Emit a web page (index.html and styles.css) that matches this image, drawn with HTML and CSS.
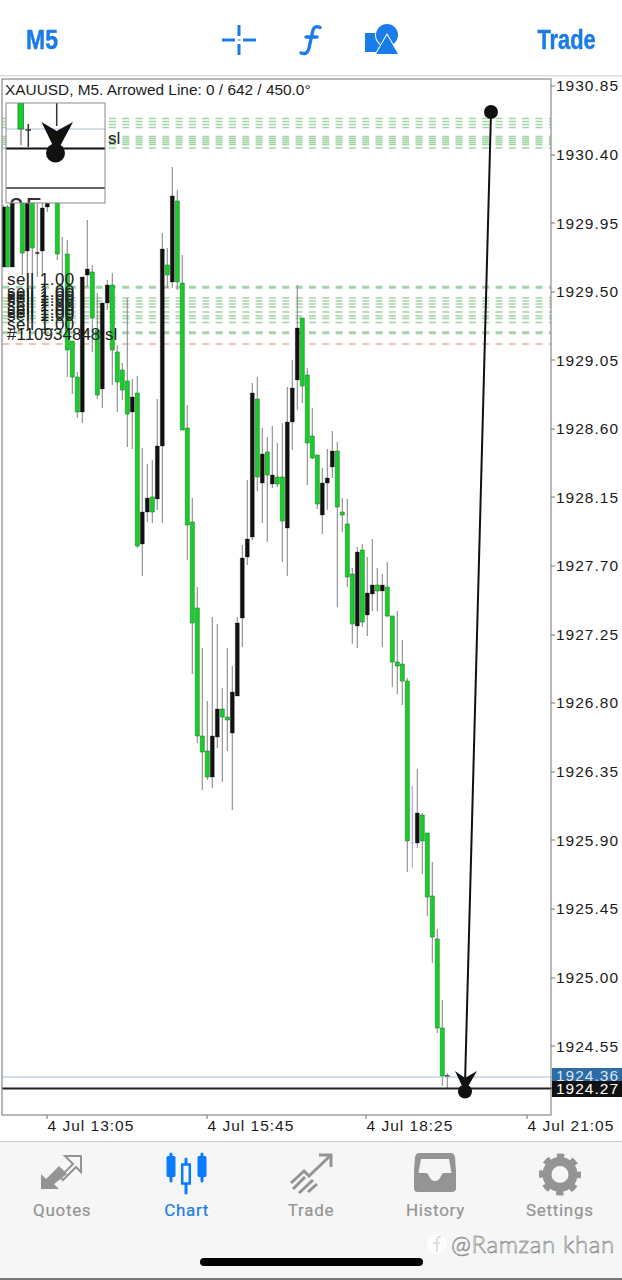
FILE: index.html
```html
<!DOCTYPE html>
<html lang="en">
<head>
<meta charset="utf-8">
<title>XAUUSD M5 Chart</title>
<link rel="stylesheet" href="styles.css">
</head>
<body>
<div class="screen">
  <header class="topbar">
    <span class="top-text top-left">M5</span>
    <div class="tools">
      <svg class="tool" width="34" height="30" viewBox="0 0 34 30"><path class="cross" d="M0 15H13M21 15H34M17 0V11M17 19V30M17 14.500V15.500"/></svg>
      <svg class="tool tool-f" width="24" height="30" viewBox="0 0 24 30"><path class="fn" d="M22 2.500C18 0.500 15.500 2 14.500 7L11 23C10 28 7 29.500 3 28M8 12H19"/></svg>
      <svg class="tool tool-s" width="34" height="32" viewBox="0 0 34 32"><rect class="shape" x="0" y="9" width="19" height="19"/><circle class="shape shape-cut" cx="22" cy="11" r="11"/><path class="shape shape-cut" d="M22 11L33 30H11Z"/></svg>
    </div>
    <span class="top-text top-right">Trade</span>
  </header>

  <svg class="chart" width="622" height="1066" viewBox="0 75 622 1066">
    <defs><clipPath id="plot"><rect x="2" y="79" width="549" height="1036"/></clipPath>
    <clipPath id="mini"><rect x="6" y="103" width="99" height="100"/></clipPath></defs>
    <rect class="top-rule" x="0" y="75" width="622" height="1.500"/>
    <g class="soft" clip-path="url(#plot)">
      <path class="lvl" d="M2.300 118.500H551M2.300 121.500H551M2.300 124.500H551M2.300 127.500H551M2.300 136.500H551M2.300 138.500H551M2.300 140.500H551M2.300 142.500H551M2.300 144.500H551M2.300 148H551"/>
      <path class="lvl" d="M2.300 286.500H551M2.300 288H551M2.300 298H551M2.300 301H551M2.300 304H551M2.300 307H551M2.300 312H551M2.300 316H551M2.300 318.500H551M2.300 322.500H551M2.300 332H551M2.300 333.500H551"/>
      <path class="lvl lvl-red" d="M2.300 344H551"/>
      <path class="wick" d="M3.300 205V267M7.300 205V267M12.300 203V267M22.300 203V275M27.300 203V293M32.300 203V295M37.300 203V277M42.300 203V277M47.300 203V212M57.300 203V260M62.300 237V295M67.300 240V377M72.300 341V394M77.300 372V418M82.300 277V423M87.300 220V287M92.300 265V352M97.300 293V399M102.300 303V408M107.300 280V310M112.300 273V385M117.300 345V412M122.300 363V400M127.300 298V447M132.300 379V449M137.300 376V548M142.300 448V576M147.300 464V522M152.300 460V523M157.300 399V510M162.300 233V523M167.300 248V288M172.300 167V288M177.300 190V290M182.300 255V430M187.300 405V560M192.300 498V674M197.300 587V743M202.300 648V790M207.300 701V780M212.300 617V788M217.300 624V748M222.300 688V782M227.300 648V751M232.300 666V810M237.300 617V696M242.300 545V647M247.300 480V565M252.300 383V540M257.300 377V491M262.300 428V523M267.300 437V542M272.300 426V488M277.300 443V487M282.300 423V562M287.300 387V576M292.300 360V450M297.300 285V410M302.300 318V403M307.300 368V485M312.300 408V459M317.300 455V509M322.300 468V534M327.300 449V510M332.300 431V478M337.300 442V607M342.300 498V532M347.300 499V587M352.300 568V644M357.300 547V648M362.300 544V627M367.300 557V636M372.300 539V611M377.300 568V611M382.300 574V647M387.300 562V617M392.300 616V687M397.300 611V694M402.300 640V705M407.300 678V872M417.300 769V848M422.300 813V874M427.300 833V916M432.300 862V963M437.300 929V1033M442.300 1000V1086M447.300 1073V1088"/>
      <path class="wick-blue" d="M412.300 786V868M410.800 843H413.800"/>
      <path class="doji" d="M35.300 253H39.300M445 1076H449.500"/>
      <path class="body-g" d="M5.300 207h4V267h-4zM20.300 203h4V253h-4zM30.300 203h4V248h-4zM55.300 203h4V254h-4zM65.300 254h4V350h-4zM70.300 341h4V377h-4zM75.300 377h4V412h-4zM90.300 272h4V318h-4zM95.300 330h4V395h-4zM110.300 285h4V350h-4zM115.300 352h4V382h-4zM120.300 370h4V390h-4zM125.300 381h4V414h-4zM135.300 393h4V546h-4zM150.300 497h4V512h-4zM165.300 265h4V275h-4zM175.300 201h4V282h-4zM180.300 283h4V430h-4zM185.300 428h4V525h-4zM190.300 522h4V623h-4zM195.300 608h4V736h-4zM200.300 736h4V752h-4zM205.300 751h4V777h-4zM220.300 709h4V717h-4zM225.300 717h4V720h-4zM255.300 399h4V477h-4zM265.300 452h4V475h-4zM275.300 477h4V484h-4zM280.300 477h4V521h-4zM300.300 318h4V386h-4zM305.300 375h4V443h-4zM310.300 436h4V458h-4zM315.300 455h4V504h-4zM335.300 451h4V507h-4zM340.300 512h4V515h-4zM345.300 524h4V577h-4zM350.300 574h4V624h-4zM360.300 550h4V622h-4zM375.300 585h4V591h-4zM385.300 587h4V616h-4zM390.300 616h4V662h-4zM395.300 662h4V666h-4zM400.300 664h4V681h-4zM405.300 681h4V841h-4zM420.300 815h4V841h-4zM425.300 833h4V897h-4zM430.300 896h4V937h-4zM435.300 939h4V1028h-4zM440.300 1028h4V1076h-4z"/>
      <path class="body-k" d="M1.300 207h4V267h-4zM10.300 203h4V267h-4zM25.300 203h4V251h-4zM40.300 208h4V251h-4zM45.300 203h4V207h-4zM80.300 277h4V412h-4zM85.300 269h4V275h-4zM100.300 303h4V389h-4zM105.300 285h4V303h-4zM130.300 397h4V412h-4zM140.300 512h4V544h-4zM145.300 498h4V512h-4zM155.300 446h4V499h-4zM160.300 249h4V446h-4zM170.300 196h4V282h-4zM210.300 736h4V777h-4zM215.300 709h4V737h-4zM230.300 692h4V733h-4zM235.300 623h4V696h-4zM240.300 558h4V618h-4zM245.300 539h4V557h-4zM250.300 393h4V537h-4zM260.300 454h4V483h-4zM270.300 475h4V484h-4zM285.300 422h4V528h-4zM290.300 388h4V422h-4zM295.300 328h4V380h-4zM320.300 483h4V515h-4zM325.300 478h4V483h-4zM330.300 451h4V467h-4zM355.300 552h4V626h-4zM365.300 593h4V615h-4zM370.300 585h4V594h-4zM380.300 585h4V591h-4zM415.300 813h4V843h-4z"/>
    </g>

    <path class="price-blue" d="M2 1077H552"/>
    <path class="price-black" d="M2 1088.500H552"/>

    <g class="trendline">
      <path class="tline" d="M491 112L465 1084"/>
      <circle cx="491" cy="112" r="7"/>
      <path d="M455 1071L465 1078L477 1071L466 1090H464Z"/>
      <circle cx="465" cy="1091.500" r="7"/>
    </g>

    <rect class="frame" x="2" y="79" width="549" height="1036"/>
    <path class="ticks" d="M551 86H555M551 155H555M551 223H555M551 292H555M551 360H555M551 429H555M551 497H555M551 566H555M551 635H555M551 703H555M551 772H555M551 840H555M551 909H555M551 978H555M551 1046H555M47 1115V1119M207 1115V1119M366 1115V1119M527 1115V1119"/>

    <text class="title" x="5" y="95">XAUUSD, M5. Arrowed Line: 0 / 642 / 450.0°</text>

    <g class="obj-text">
      <text x="7" y="285">sell 1.00</text><text x="7" y="297">sell 1.00</text><text x="7" y="300">sell 1.00</text><text x="7" y="303">sell 1.00</text><text x="7" y="306">sell 1.00</text><text x="7" y="311">sell 1.00</text><text x="7" y="315">sell 1.00</text><text x="7" y="318">sell 1.00</text><text x="7" y="321">sell 1.00</text><text x="7" y="330">sell 1.00</text>
    </g>
    <text class="order" x="7" y="340">#110934848 sl</text>
    <text class="order" x="108" y="144">sl</text>

    <rect class="mini-bg" x="6" y="103" width="99" height="100"/>
    <g clip-path="url(#mini)">
      <path class="mini-blue" d="M6 129H105"/>
      <path class="mini-wick" d="M21 129V145"/>
      <rect class="mini-candle" x="18" y="103" width="5.500" height="26"/>
      <path class="mini-dark" d="M28.300 124V147M25.500 130H31M56.700 103V126M6 188H105"/>
      <path class="mini-black" d="M6 148.500H105"/>
      <path class="mini-arrow" d="M41.500 122L56.700 131L73 122L58 150H55Z"/>
      <circle class="mini-arrow" cx="55.500" cy="153" r="9.500"/>
      <text class="mini-num" x="9" y="216">2F</text>
    </g>
    <rect class="mini-frame" x="6" y="103" width="99" height="100"/>

    <g class="axis">
      <text x="556" y="91">1930.85</text><text x="556" y="160">1930.40</text><text x="556" y="229">1929.95</text><text x="556" y="297">1929.50</text><text x="556" y="366">1929.05</text><text x="556" y="434">1928.60</text><text x="556" y="503">1928.15</text><text x="556" y="571">1927.70</text><text x="556" y="640">1927.25</text><text x="556" y="708">1926.80</text><text x="556" y="777">1926.35</text><text x="556" y="846">1925.90</text><text x="556" y="914">1925.45</text><text x="556" y="983">1925.00</text><text x="556" y="1052">1924.55</text>
    </g>
    <rect class="tag-blue" x="552" y="1068" width="70" height="14"/>
    <text class="tag-text tag-text-blue" x="556" y="1081">1924.36</text>
    <rect class="tag-black" x="552" y="1081" width="70" height="16"/>
    <text class="tag-text" x="556" y="1094">1924.27</text>
    <g class="axis">
      <text x="47.500" y="1131">4 Jul 13:05</text><text x="207.500" y="1131">4 Jul 15:45</text><text x="366.500" y="1131">4 Jul 18:25</text><text x="527.500" y="1131">4 Jul 21:05</text>
    </g>
  </svg>

  <nav class="tabbar">
    <div class="tab">
      <svg class="tab-icon" width="44" height="42" viewBox="0 0 44 42"><path class="ic-fill" d="M1 36L1 21L6 26L19 13L27 21L14 31L19 36Z"/><path class="ic-line" d="M25 3H41V19L36 14L23 27L20 24L33 11Z"/></svg>
      <span class="tab-label">Quotes</span>
    </div>
    <div class="tab tab-active">
      <svg class="tab-icon" width="44" height="42" viewBox="0 0 44 42"><path class="ic-blue" d="M6 1V28"/><rect class="ic-bluefill" x="1.500" y="3" width="9" height="21" rx="1.500"/><path class="ic-blue" d="M21 6V40"/><rect class="ic-blueopen" x="17.200" y="11.500" width="7.600" height="19"/><path class="ic-blue" d="M37 1V28"/><rect class="ic-bluefill" x="32.500" y="3" width="9" height="21" rx="1.500"/></svg>
      <span class="tab-label">Chart</span>
    </div>
    <div class="tab">
      <svg class="tab-icon" width="44" height="42" viewBox="0 0 44 42"><path class="ic-line2" d="M2 30L15 18L20 23L41 3M30 2H42V14M4 36L16 24M10 40L24 27M19 39L28 31"/></svg>
      <span class="tab-label">Trade</span>
    </div>
    <div class="tab">
      <svg class="tab-icon" width="44" height="42" viewBox="0 0 44 42"><path class="ic-fill" fill-rule="evenodd" d="M6 0H38Q41 0 42 4L43 18V35Q43 39 39 39H5Q1 39 1 35V18L2 4Q3 0 6 0ZM8 6L5.500 20H13Q15 20 16 23Q18 28 22 28Q26 28 28 23Q29 20 31 20H38.500L36 6Z"/></svg>
      <span class="tab-label">History</span>
    </div>
    <div class="tab">
      <svg class="tab-icon" width="44" height="42" viewBox="0 0 44 42"><circle class="gear-ring" cx="22" cy="21.500" r="13"/><circle class="gear-teeth" cx="22" cy="21.500" r="18"/></svg>
      <span class="tab-label">Settings</span>
    </div>
    <div class="home-bar"></div>
    <div class="watermark">
      <svg class="wm-icon" width="22" height="24" viewBox="0 0 22 24"><circle class="wm-circle" cx="11" cy="12" r="10"/><path class="wm-f" d="M15 5Q11 4 11 8V20M7 11H14"/></svg>
      <span class="wm-text">@Ramzan khan</span>
    </div>
  </nav>
</div>
</body>
</html>
```

FILE: styles.css
```css
* { box-sizing: border-box; }
html, body { margin: 0; padding: 0; background: #fff; }
.screen { width: 622px; height: 1280px; overflow: hidden; display: flex; flex-direction: column; font-family: "Liberation Sans", Arial, sans-serif; }

.topbar { height: 75px; flex: none; display: grid; grid-template-columns: 196px 176px 1fr; align-items: center; padding: 4px 26px 0 26px; background: #fff; }
.top-text { color: #1a7bea; font-weight: 700; font-size: 28px; line-height: 1; display: block; -webkit-text-stroke: .5px #1a7bea; }
.top-left { transform: scaleX(.82); transform-origin: left center; }
.top-right { justify-self: end; transform: scaleX(.78); transform-origin: right center; }
.tools { display: flex; align-items: center; }
.tool-f { margin-left: 42px; }
.tool-s { margin-left: 43px; }
.tool { overflow: visible; }
.cross { fill: none; stroke: #1a7bea; stroke-width: 3; }
.fn { fill: none; stroke: #1a7bea; stroke-width: 3.400; stroke-linecap: round; }
.shape { fill: #1a7bea; }
.shape-cut { stroke: #fff; stroke-width: 2; paint-order: stroke; }

.chart { display: block; flex: none; background: #fff; }
.top-rule { fill: #dcdcdc; }
.soft { filter: blur(.35px); }
.frame { fill: none; stroke: #8a8a8a; stroke-width: 1.200; }
.ticks { stroke: #777; stroke-width: 1; }
.lvl { fill: none; stroke: #a3d4a5; stroke-width: 1.400; stroke-dasharray: 7 6.330; }
.lvl-red { stroke: #f6c0b4; stroke-width: 1.800; }
.wick { fill: none; stroke: #8c8c8c; stroke-width: 1.100; }
.wick-blue { fill: none; stroke: #a9a6dd; stroke-width: 1.100; }
.doji { fill: none; stroke: #222; stroke-width: 1.500; }
.body-g { fill: #16d028; stroke: #1f7f2a; stroke-width: .6; }
.body-k { fill: #111; stroke: #111; stroke-width: .3; }
.price-blue { stroke: #a8bfd6; stroke-width: 1; }
.price-black { stroke: #222; stroke-width: 2; }
.tline { stroke: #111; stroke-width: 2; fill: none; }
.trendline { fill: #111; }
.title { font-size: 15.400px; fill: #1c1c1c; }
.obj-text { font-size: 17px; fill: #222; letter-spacing: .5px; }
.order { font-size: 17px; fill: #222; }
.mini-bg { fill: #fff; }
.mini-frame { fill: none; stroke: #8a8a8a; stroke-width: 1; }
.mini-blue { stroke: #a8bfd6; stroke-width: 1; }
.mini-wick { stroke: #8c8c8c; stroke-width: 1.500; }
.mini-candle { fill: #16d028; stroke: #1f7f2a; stroke-width: .8; }
.mini-dark { stroke: #333; stroke-width: 1.500; fill: none; }
.mini-black { stroke: #111; stroke-width: 2; }
.mini-arrow { fill: #111; }
.mini-num { font-size: 26px; fill: #333; letter-spacing: 2px; }
.axis { font-size: 15.500px; letter-spacing: 1px; fill: #1c1c1c; }
.tag-blue { fill: #2e6ca6; }
.tag-black { fill: #111; }
.tag-text { font-size: 15.500px; letter-spacing: 1px; fill: #fff; }
.tag-text-blue { fill: #d7e6f4; }

.tabbar { position: relative; flex: none; height: 139px; background: #f6f6f6; border-top: 1.500px solid #cfcfcf; border-bottom: 2px solid #777; display: flex; align-items: flex-start; }
.tab { flex: 1; display: flex; flex-direction: column; align-items: center; padding-top: 11px; color: #949494; }
.tab-active { color: #1a7bea; }
.tab-icon { display: block; overflow: visible; }
.tab-label { font-family: Roboto, "Liberation Sans", sans-serif; font-weight: 400; font-size: 17px; letter-spacing: .7px; margin-top: 5px; line-height: 20px; -webkit-text-stroke: .2px currentColor; }
.ic-fill { fill: #949494; }
.ic-line { fill: none; stroke: #949494; stroke-width: 2; }
.ic-line2 { fill: none; stroke: #949494; stroke-width: 3; }
.ic-blue { fill: none; stroke: #0a7aff; stroke-width: 3; stroke-linecap: round; }
.ic-bluefill { fill: #0a7aff; }
.ic-blueopen { fill: #f6f6f6; stroke: #0a7aff; stroke-width: 2.500; }
.gear-ring { fill: none; stroke: #949494; stroke-width: 9; }
.gear-teeth { fill: none; stroke: #949494; stroke-width: 6; stroke-dasharray: 7.100 7.037; stroke-dashoffset: 3.550; }
.home-bar { position: absolute; left: 200px; top: 116px; width: 223px; height: 8px; border-radius: 4px; background: #000; }
.watermark { position: absolute; left: 426px; top: 87px; display: flex; align-items: center; gap: 3px; }
.wm-circle { fill: #fff; opacity: .85; }
.wm-f { fill: none; stroke: #dedede; stroke-width: 2; }
.wm-text { font-family: Lato, "Liberation Sans", sans-serif; font-weight: 300; font-size: 24px; letter-spacing: .6px; color: #fff; -webkit-text-stroke: .5px #666; white-space: nowrap; }
```
